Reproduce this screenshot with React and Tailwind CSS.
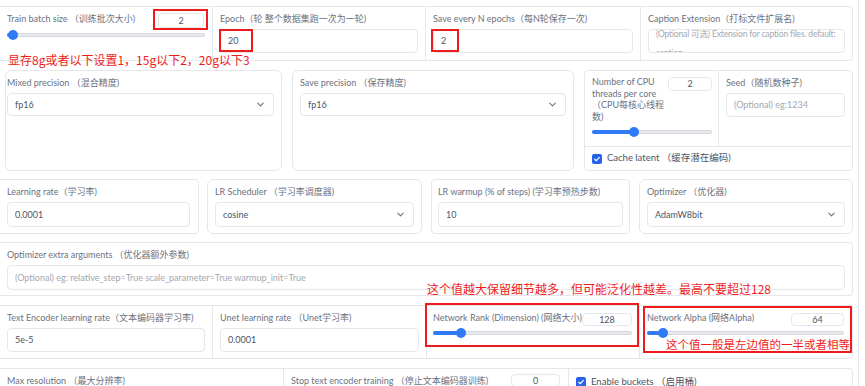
import React from "react";

const LABEL = "text-[9px] leading-[11px] text-[#6b7280] whitespace-nowrap";
const LINE = "border-[#e5e7eb]";
const RED = "#f01c1c";

function Label({ children, className = "" }) {
  return <div className={`${LABEL} ${className}`}>{children}</div>;
}

function Field({ value, placeholder, className = "h-[24px]" }) {
  return (
    <div
      className={`${className} mt-[5px] flex items-center rounded-[4px] border ${LINE} bg-white px-[7px] text-[9px] whitespace-nowrap overflow-hidden`}
    >
      {value ? (
        <span className="text-[#4b5563]">{value}</span>
      ) : (
        <span className="text-[#a3a8b1]">{placeholder}</span>
      )}
    </div>
  );
}

function Select({ value, className = "h-[24px]" }) {
  return (
    <div
      className={`${className} mt-[5px] flex items-center justify-between rounded-[4px] border ${LINE} bg-white pl-[7px] pr-[8px] text-[9px] text-[#4b5563]`}
    >
      <span>{value}</span>
      <svg viewBox="0 0 10 10" className="w-[9px] h-[9px]">
        <path d="M2 3.5l3 3 3-3" fill="none" stroke="#6b7280" strokeWidth="1.2" strokeLinecap="round" strokeLinejoin="round" />
      </svg>
    </div>
  );
}

function NumBox({ value, className = "" }) {
  return (
    <div
      className={`${className} flex items-center justify-center rounded-[4px] border ${LINE} bg-white text-[9px] leading-[10px] text-[#4b5563]`}
    >
      {value}
    </div>
  );
}

function Slider({ pct, className = "" }) {
  return (
    <div className={`${className} relative h-[10px] flex items-center`}>
      <div className="h-[4px] w-full rounded-full border border-[#d4d7dc] bg-[#e8eaed]" />
      <div className="absolute left-0 h-[4px] rounded-full bg-[#2f7bf5]" style={{ width: `${pct}%` }} />
      <div
        className="absolute top-0 w-[10px] h-[10px] -translate-x-1/2 rounded-full bg-[#2f7bf5]"
        style={{ left: `${pct}%` }}
      />
    </div>
  );
}

function Check() {
  return (
    <div className="w-[10px] h-[10px] rounded-[2px] bg-[#2563eb] flex items-center justify-center">
      <svg viewBox="0 0 12 12" className="w-[8px] h-[8px]">
        <path d="M2.5 6.3l2.3 2.3 4.7-5" fill="none" stroke="white" strokeWidth="1.8" strokeLinecap="round" strokeLinejoin="round" />
      </svg>
    </div>
  );
}

function RedBox({ className }) {
  return <div className={`absolute border-2 border-[#f01c1c] ${className}`} />;
}

function Note({ children, className }) {
  return (
    <div
      className={`absolute whitespace-nowrap font-['Noto_Sans_CJK_SC',sans-serif] leading-[14px] ${className}`}
      style={{ color: RED }}
    >
      {children}
    </div>
  );
}

export default function App() {
  return (
    <div className="relative w-[865px] h-[386px] overflow-hidden bg-white font-['Lato','Noto_Sans_CJK_SC',sans-serif]">
      <div className={`w-[859px] h-full border-r ${LINE}`}>
        <div className="w-[853px] flex flex-col">
          {/* Row 1 */}
          <div className={`mt-[6px] h-[55px] flex border-y border-r ${LINE} rounded-r-[4px]`}>
            <div className="w-[212px] px-[7px] pt-[5px]">
              <div className="flex items-start justify-between h-[16px]">
                <Label className="mt-[1px]">Train batch size （训练批次大小)</Label>
                <NumBox value="2" className="mt-[1px] mr-[1px] w-[46px] h-[15px]" />
              </div>
              <Slider pct={3} className="mt-[2px]" />
            </div>
            <div className={`w-[213px] border-l ${LINE} px-[7px] pt-[6px]`}>
              <Label>Epoch（轮 整个数据集跑一次为一轮)</Label>
              <Field value="20" />
            </div>
            <div className={`w-[215px] border-l ${LINE} px-[7px] pt-[6px]`}>
              <Label>Save every N epochs（每N轮保存一次)</Label>
              <Field value="2" />
            </div>
            <div className={`flex-1 border-l ${LINE} px-[7px] pt-[6px]`}>
              <Label>Caption Extension（打标文件扩展名)</Label>
              <div className={`mt-[5px] h-[24px] overflow-hidden rounded-[4px] border ${LINE} px-[7px] text-[8.5px] tracking-[-0.15px] leading-[19px] text-[#a3a8b1]`}>
                <div className="-mt-[5px]">(Optional 可选) Extension for caption files. default: caption</div>
              </div>
            </div>
          </div>

          {/* Row 2 */}
          <div className="mt-[9px] h-[101px] flex">
            <div className={`ml-[5px] w-[277px] rounded-[6px] border ${LINE} pl-[1px] pr-[7px] pt-[6px]`}>
              <Label>Mixed precision （混合精度)</Label>
              <Select value="fp16" className="h-[23px]" />
            </div>
            <div className={`ml-[10px] w-[282px] rounded-[6px] border ${LINE} px-[7px] pt-[6px]`}>
              <Label>Save precision （保存精度)</Label>
              <Select value="fp16" className="h-[23px]" />
            </div>
            <div className={`ml-[10px] flex-1 flex flex-col rounded-[4px] border ${LINE}`}>
              <div className="h-[75px] flex">
                <div className={`w-[134px] border-r ${LINE} pl-[7px] pr-[6px] pt-[5px]`}>
                  <div className="flex items-start justify-between">
                    <div className="text-[9px] leading-[11.5px] text-[#6b7280]">
                      Number of CPU
                      <br />
                      threads per core
                      <br />
                      （CPU每核心线程
                      <br />
                      数)
                    </div>
                    <NumBox value="2" className="mt-[1px] w-[44px] h-[14px]" />
                  </div>
                  <Slider pct={35} className="mt-[5px]" />
                </div>
                <div className="flex-1 px-[7px] pt-[6px]">
                  <Label>Seed（随机数种子)</Label>
                  <Field placeholder="(Optional) eg:1234" />
                </div>
              </div>
              <div className={`flex-1 border-t ${LINE} flex items-center gap-[5px] px-[7px]`}>
                <Check />
                <span className="text-[9.5px] text-[#4b5563]">Cache latent （缓存潜在编码)</span>
              </div>
            </div>
          </div>

          {/* Row 3 */}
          <div className="mt-[8px] h-[55px] flex">
            <div className={`w-[199px] border-y border-r ${LINE} rounded-r-[4px] pl-[7px] pr-[8px] pt-[6px]`}>
              <Label>Learning rate（学习率)</Label>
              <Field value="0.0001" className="h-[25px]" />
            </div>
            <div className={`ml-[8px] w-[215px] rounded-[6px] border ${LINE} px-[7px] pt-[6px]`}>
              <Label>LR Scheduler （学习率调度器)</Label>
              <Select value="cosine" className="h-[25px]" />
            </div>
            <div className={`ml-[9px] w-[199px] rounded-[4px] border ${LINE} px-[6px] pt-[6px]`}>
              <Label>LR warmup (% of steps) (学习率预热步数)</Label>
              <Field value="10" className="h-[25px]" />
            </div>
            <div className={`ml-[9px] flex-1 rounded-[6px] border ${LINE} px-[7px] pt-[6px]`}>
              <Label>Optimizer （优化器)</Label>
              <Select value="AdamW8bit" className="h-[25px]" />
            </div>
          </div>

          {/* Row 4 */}
          <div className={`mt-[8px] h-[54px] border-y border-r ${LINE} rounded-r-[4px] px-[7px] pt-[6px]`}>
            <Label>Optimizer extra arguments （优化器额外参数)</Label>
            <Field
              placeholder="(Optional) eg: relative_step=True scale_parameter=True warmup_init=True"
              className="h-[25px]"
            />
          </div>

          {/* Row 5 */}
          <div className={`mt-[9px] h-[54px] flex border-y border-r ${LINE} rounded-r-[4px]`}>
            <div className="w-[212px] px-[7px] pt-[6px]">
              <Label>Text Encoder learning rate（文本编码器学习率)</Label>
              <Field value="5e-5" />
            </div>
            <div className={`w-[214px] border-l ${LINE} px-[7px] pt-[6px]`}>
              <Label>Unet learning rate （Unet学习率)</Label>
              <Field value="0.0001" />
            </div>
            <div className={`w-[213px] border-l ${LINE} pl-[6px] pr-[7px] pt-[6px]`}>
              <div className="flex items-start justify-between h-[14px]">
                <Label>Network Rank (Dimension) (网络大小)</Label>
                <NumBox value="128" className="mt-[1px] w-[54px] h-[13px]" />
              </div>
              <Slider pct={14} className="mt-[2px]" />
            </div>
            <div className={`flex-1 border-l ${LINE} pl-[7px] pr-[8px] pt-[6px]`}>
              <div className="flex items-start justify-between h-[14px]">
                <Label>Network Alpha (网络Alpha)</Label>
                <NumBox value="64" className="mt-[1px] w-[53px] h-[13px]" />
              </div>
              <Slider pct={8} className="mt-[2px]" />
            </div>
          </div>

          {/* Row 6 */}
          <div className={`mt-[9px] h-[40px] flex border-t border-r ${LINE} rounded-tr-[4px]`}>
            <div className="w-[283px] px-[7px] pt-[6px]">
              <Label>Max resolution （最大分辨率)</Label>
            </div>
            <div className={`w-[285px] border-l ${LINE} pl-[7px] pr-[8px] pt-[5px]`}>
              <div className="flex items-start justify-between">
                <Label className="mt-[1px]">Stop text encoder training （停止文本编码器训练)</Label>
                <NumBox value="0" className="w-[49px] h-[13px]" />
              </div>
            </div>
            <div className={`flex-1 border-l ${LINE} pl-[7px] pt-[8px] flex items-start gap-[5px]`}>
              <Check />
              <span className="text-[9.5px] leading-[10px] text-[#4b5563]">Enable buckets （启用桶)</span>
            </div>
          </div>
        </div>
      </div>

      {/* annotations */}
      <RedBox className="left-[153px] top-[9px] w-[55px] h-[21px]" />
      <RedBox className="left-[219px] top-[29px] w-[34px] h-[23px]" />
      <RedBox className="left-[431px] top-[29px] w-[28px] h-[23px]" />
      <RedBox className="left-[425px] top-[303px] w-[214px] h-[44px]" />
      <RedBox className="left-[643px] top-[306px] w-[209px] h-[47px]" />
      <Note className="left-[8px] top-[53px] text-[12px]">显存8g或者以下设置1，15g以下2，20g以下3</Note>
      <Note className="left-[427px] top-[282px] text-[12px]">这个值越大保留细节越多，但可能泛化性越差。最高不要超过128</Note>
      <Note className="left-[666px] top-[337px] text-[11.5px]">这个值一般是左边值的一半或者相等</Note>
    </div>
  );
}
